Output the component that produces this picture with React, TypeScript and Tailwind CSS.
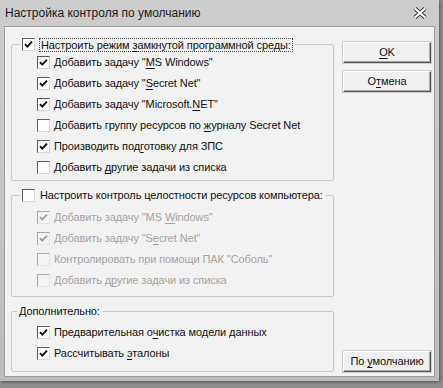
import type { ReactNode } from "react";

// Windows-style dialog: "Настройка контроля по умолчанию"

function Check({ checked, disabled }: { checked?: boolean; disabled?: boolean }) {
  return (
    <span
      className={`flex h-[13px] w-[13px] shrink-0 items-center justify-center border ${
        disabled
          ? "border-t-[#a8a8a8] border-l-[#a8a8a8] border-r-[#e4e4e4] border-b-[#e4e4e4] bg-[#f4f4f4]"
          : "border-t-[#5c5c5c] border-l-[#5c5c5c] border-r-[#d8d8d8] border-b-[#d8d8d8] bg-white"
      }`}
    >
      {checked ? (
        <svg width="9" height="9" viewBox="0 0 9 9">
          <path
            d="M1 4.2 L3.3 6.6 L8 1.6"
            fill="none"
            stroke={disabled ? "#a0a0a0" : "#111"}
            strokeWidth="1.9"
          />
        </svg>
      ) : null}
    </span>
  );
}

function Row({
  checked,
  disabled,
  children,
}: {
  checked?: boolean;
  disabled?: boolean;
  children: ReactNode;
}) {
  return (
    <div
      className={`flex h-[21px] items-center gap-[4px] pl-[25px] ${
        disabled ? "text-[#a3a3a3]" : "text-[#111]"
      }`}
    >
      <Check checked={checked} disabled={disabled} />
      <span className="whitespace-nowrap">{children}</span>
    </div>
  );
}

function U({ children }: { children: ReactNode }) {
  return <span className="underline underline-offset-[2px]">{children}</span>;
}

function Btn({ children }: { children: ReactNode }) {
  return (
    <button className="flex h-[21px] w-[88px] items-center justify-center border border-t-white border-l-white border-r-[#505050] border-b-[#505050] bg-[#f0f0f0] text-[#111] shadow-[inset_-1px_-1px_0_#a8a8a8,0_0_0_1px_#cfcfcf]">
      <span className="whitespace-nowrap">{children}</span>
    </button>
  );
}

export default function App() {
  return (
    <div className="h-[388px] w-[443px] overflow-hidden bg-[#8e8e8e] font-['Liberation_Sans',sans-serif] text-[11px] tracking-[-0.1px]">
      <div className="flex h-[381px] w-[439px] flex-col bg-gradient-to-b from-[#cdcdcd] to-[#bcbcbc] shadow-[1px_1px_3px_#555]">
        {/* title bar */}
        <div className="flex h-[26px] items-center justify-between pl-[5px] pr-[12px]">
          <span className="text-[12px] tracking-normal text-[#1a1a1a]">Настройка контроля по умолчанию</span>
          <svg width="14" height="12" viewBox="0 0 14 12">
            <path d="M2 1.5 L12 10.5 M12 1.5 L2 10.5" stroke="#3a3a3a" strokeWidth="4" />
            <path d="M2 1.5 L12 10.5 M12 1.5 L2 10.5" stroke="#fff" strokeWidth="2" />
          </svg>
        </div>

        {/* client area */}
        <div className="mx-[4px] mb-[4px] flex flex-1 border border-[#9a9a9a] bg-[#f2f2f2] pl-[6px] pr-[3px]">
          <div className="flex w-[324px] flex-col">
            <fieldset className="mt-[10px] rounded-[2px] border border-[#c9c9c9] pb-[2px]">
              <legend className="ml-[8px] px-[2px]">
                <div className="flex h-[15px] items-center gap-[4px] text-[#111]">
                  <Check checked />
                  <span className="whitespace-nowrap border border-dotted border-[#444] px-[1px] leading-[12px]">
                    Настроить режим <U>з</U>амкнутой программной среды:
                  </span>
                </div>
              </legend>
              <Row checked>
                Добавить задачу "<U>M</U>S Windows"
              </Row>
              <Row checked>
                Добавить задачу "<U>S</U>ecret Net"
              </Row>
              <Row checked>
                Добавить задачу "Microsoft.<U>N</U>ET"
              </Row>
              <Row>
                Добавить группу ресурсов по <U>ж</U>урналу Secret Net
              </Row>
              <Row checked>
                Производить под<U>г</U>отовку для ЗПС
              </Row>
              <Row>
                Добавить <U>д</U>ругие задачи из списка
              </Row>
            </fieldset>

            <fieldset className="mt-[7px] rounded-[2px] border border-[#c9c9c9] pt-[4px] pb-[5px]">
              <legend className="ml-[8px] px-[2px]">
                <div className="flex h-[15px] items-center gap-[5px] text-[#111]">
                  <Check />
                  <span className="whitespace-nowrap">Настроить контроль целостности ресурсов компьютера:</span>
                </div>
              </legend>
              <Row checked disabled>
                Добавить задачу "MS <U>W</U>indows"
              </Row>
              <Row checked disabled>
                Добавить задачу "S<U>e</U>cret Net"
              </Row>
              <Row disabled>Контролировать при помощи ПАК "Соболь"</Row>
              <Row disabled>
                Добавить д<U>р</U>угие задачи из списка
              </Row>
            </fieldset>

            <fieldset className="mt-[7px] rounded-[2px] border border-[#c9c9c9] pt-[3px] pb-[7px]">
              <legend className="ml-[5px] px-[2px]">
                <div className="flex h-[15px] items-center text-[#111]">Дополнительно:</div>
              </legend>
              <Row checked>
                Предварительная о<U>ч</U>истка модели данных
              </Row>
              <Row checked>
                Рассчитывать <U>э</U>талоны
              </Row>
            </fieldset>
          </div>

          <div className="ml-[9px] flex flex-col pt-[15px] pb-[4px]">
            <Btn>
              <U>O</U>K
            </Btn>
            <div className="h-[8px]" />
            <Btn>
              О<U>т</U>мена
            </Btn>
            <div className="flex-1" />
            <Btn>
              По <U>у</U>молчанию
            </Btn>
          </div>
        </div>
      </div>
    </div>
  );
}
